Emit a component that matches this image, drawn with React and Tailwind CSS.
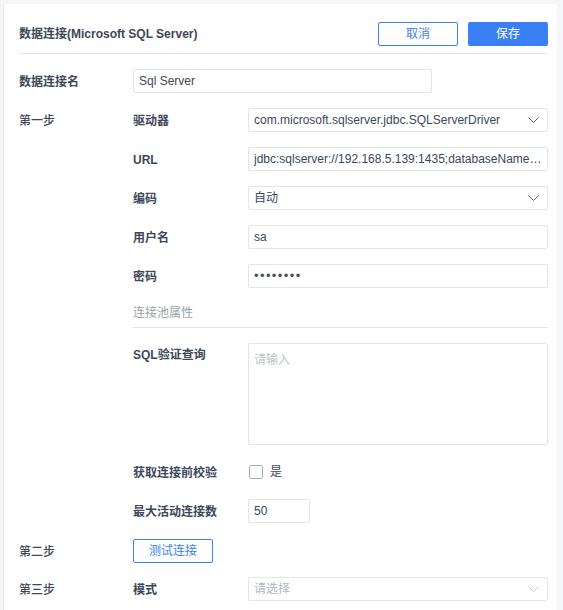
import React from 'react';

const font = { fontFamily: '"Liberation Sans", "Noto Sans CJK SC", sans-serif' };

function Chevron({ light }) {
  return (
    <svg width="11" height="6" viewBox="0 0 11 6" className="shrink-0">
      <path d="M0.5 0.5l5 5 5-5" fill="none" stroke={light ? '#c4c8ce' : '#5b6472'} strokeWidth="1" />
    </svg>
  );
}

function Input({ children, className = '', muted }) {
  return (
    <div
      className={`h-[24px] border border-[#e3e5e8] rounded-[2px] bg-white flex items-center px-[5px] text-[12px] ${muted ? 'text-[#b4b8bf]' : 'text-[#3d4757]'} ${className}`}
    >
      {children}
    </div>
  );
}

function Select({ value, placeholder }) {
  return (
    <Input muted={!value} className="w-[300px] justify-between pr-[8px]">
      <span className="truncate">{value || placeholder}</span>
      <Chevron light={!value} />
    </Input>
  );
}

function Row({ step, label, children, top, className = 'mb-[15px]' }) {
  return (
    <div className={`flex ${top ? 'items-start' : 'items-center h-[24px]'} ${className}`}>
      <div className="w-[114px] shrink-0 pt-[2px] text-[12px] font-medium text-[#3d4757]">{step}</div>
      <div className={`w-[115px] shrink-0 text-[12px] font-bold text-[#3d4757] ${top ? 'pt-[3px]' : 'pt-[1px]'}`}>{label}</div>
      {children}
    </div>
  );
}

export default function App() {
  return (
    <div className="w-[563px] h-[610px] bg-[#f5f6f8] pt-[4px] pl-[3px] pr-[6px] overflow-hidden" style={font}>
      <div className="h-full bg-white border-l border-[#e6e8eb] pl-[15px] pr-[9px]">
        {/* Header */}
        <div className="flex items-center justify-between pt-[18px] pb-[7px] border-b border-[#e6e8eb]">
          <h1 className="text-[12px] font-bold text-[#3d4757]">数据连接(Microsoft SQL Server)</h1>
          <div className="flex gap-[10px]">
            <button className="w-[80px] h-[24px] border border-[#3a80f5] rounded-[2px] text-[12px] text-[#3a80f5] bg-white">取消</button>
            <button className="w-[80px] h-[24px] rounded-[2px] text-[12px] text-white bg-[#3a80f5]">保存</button>
          </div>
        </div>

        <div className="pt-[15px]">
          <div className="flex items-center h-[24px] mb-[15px]">
            <div className="w-[114px] shrink-0 pt-[1px] text-[12px] font-bold text-[#3d4757]">数据连接名</div>
            <Input className="w-[299px]">Sql Server</Input>
          </div>

          <Row step="第一步" label="驱动器">
            <Select value="com.microsoft.sqlserver.jdbc.SQLServerDriver" />
          </Row>
          <Row label="URL">
            <Input className="w-[300px]">
              <span className="truncate">jdbc:sqlserver://192.168.5.139:1435;databaseName=test</span>
            </Input>
          </Row>
          <Row label="编码">
            <Select value="自动" />
          </Row>
          <Row label="用户名">
            <Input className="w-[300px]">sa</Input>
          </Row>
          <Row label="密码" className="mb-[17px]">
            <Input className="w-[300px]">
              <span className="text-[13px] tracking-[1.4px] text-[#4a5362]">••••••••</span>
            </Input>
          </Row>

          <div className="ml-[114px] border-b border-[#e3e5e8] pb-[5px] mb-[15px] text-[12px] leading-[17px] text-[#9ca1a9]">连接池属性</div>

          <Row label="SQL验证查询" top className="mb-[15px]">
            <div className="w-[300px] h-[102px] border border-[#e3e5e8] rounded-[2px] px-[5px] pt-[7px] text-[12px] text-[#c0c4cb]">请输入</div>
          </Row>
          <Row label="获取连接前校验" className="mb-[15px]">
            <div className="flex items-center gap-[7px] pl-[1px]">
              <span className="w-[14px] h-[14px] border border-[#a9afb8] rounded-[2px] bg-white" />
              <span className="text-[12px] text-[#3d4757]">是</span>
            </div>
          </Row>
          <Row label="最大活动连接数" className="mb-[16px]">
            <Input className="w-[62px]">50</Input>
          </Row>

          <div className="flex items-center h-[24px] mb-[14px]">
            <div className="w-[114px] shrink-0 pt-[2px] text-[12px] font-medium text-[#3d4757]">第二步</div>
            <button className="w-[80px] h-[24px] border border-[#3a80f5] rounded-[2px] text-[12px] text-[#3a80f5] bg-white">测试连接</button>
          </div>

          <Row step="第三步" label="模式">
            <Select placeholder="请选择" />
          </Row>
        </div>
      </div>
    </div>
  );
}
